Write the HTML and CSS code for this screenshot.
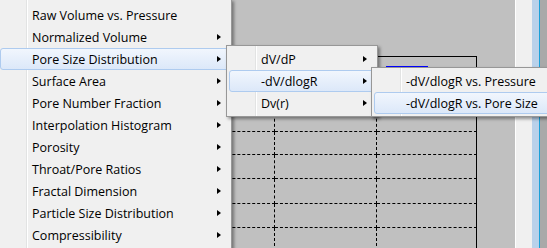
FILE: index.html
```html
<!DOCTYPE html>
<html lang="en">
<head>
    <meta charset="UTF-8">
    <title>Pore Size Distribution menu</title>
    <link rel="stylesheet" href="styles.css">
</head>
<body>
    <div class="chart">
        <div class="plot">
            <div class="cell"></div>
            <div class="cell"></div>
            <div class="cell"></div>
            <div class="cell"><div class="legend-line"></div></div>
            <div class="cell"></div>
            <div class="cell"></div>
            <div class="cell"></div>
            <div class="cell"></div>
            <div class="cell"></div>
            <div class="cell"></div>
            <div class="cell"></div>
            <div class="cell"></div>
            <div class="cell"></div>
            <div class="cell"></div>
            <div class="cell"></div>
            <div class="cell"></div>
            <div class="cell"></div>
            <div class="cell"></div>
            <div class="cell"></div>
            <div class="cell"></div>
            <div class="cell"></div>
            <div class="cell"></div>
            <div class="cell"></div>
            <div class="cell"></div>
        </div>
    </div>

    <div class="side">
        <div class="side-face"></div>
        <div class="side-blue"></div>
        <div class="side-edge"></div>
        <div class="side-dark"></div>
    </div>

    <!-- Main menu -->
    <ul class="menu menu-main">
        <li class="item">Raw Volume vs. Pressure</li>
        <li class="item">Normalized Volume<span class="arrow"></span></li>
        <li class="item active">Pore Size Distribution<span class="arrow"></span></li>
        <li class="item">Surface Area<span class="arrow"></span></li>
        <li class="item">Pore Number Fraction<span class="arrow"></span></li>
        <li class="item">Interpolation Histogram<span class="arrow"></span></li>
        <li class="item">Porosity<span class="arrow"></span></li>
        <li class="item">Throat/Pore Ratios<span class="arrow"></span></li>
        <li class="item">Fractal Dimension<span class="arrow"></span></li>
        <li class="item">Particle Size Distribution<span class="arrow"></span></li>
        <li class="item">Compressibility<span class="arrow"></span></li>
    </ul>

    <!-- Pore Size Distribution submenu -->
    <ul class="menu menu-psd">
        <li class="item">dV/dP<span class="arrow"></span></li>
        <li class="item active">-dV/dlogR<span class="arrow"></span></li>
        <li class="item">Dv(r)<span class="arrow"></span></li>
    </ul>

    <!-- -dV/dlogR submenu -->
    <ul class="menu menu-dlogr">
        <li class="item">-dV/dlogR vs. Pressure</li>
        <li class="item active">-dV/dlogR vs. Pore Size</li>
    </ul>
</body>
</html>
```

FILE: styles.css
```css
/* Reset */
* {
    margin: 0;
    padding: 0;
    box-sizing: border-box;
}

body {
    width: 547px;
    height: 248px;
    overflow: hidden;
    position: relative;
    display: flex;
    background: #c0c0c0;
    font-family: "Open Sans", "Noto Sans", sans-serif;
    font-size: 12.5px;
    color: #000;
}

/* Chart area */
.chart {
    width: 515px;
    height: 248px;
    padding: 56px 0 0 70px;
}

.plot {
    width: 407px;
    height: 200px;
    border: 1px solid #000;
    border-bottom: none;
    display: grid;
    grid-template-columns: 102px 102px 102px 100px;
    grid-template-rows: 75px 23px 24px 25px 24px 1fr;
}

.cell {
    border-right: 1px dashed #000;
    border-bottom: 1px dashed #000;
}

.cell:nth-child(4n) {
    border-right: none;
}

.legend-line {
    margin: 9px 0 0 9px;
    width: 42px;
    height: 2px;
    background: #0000ff;
}

/* Right scroller strip */
.side {
    width: 32px;
    height: 248px;
    display: flex;
    border-left: 1px solid #fff;
}

.side-face {
    width: 16px;
    background: #f0f0f0;
}

.side-blue {
    width: 7px;
    background: #b9d1ea;
}

.side-edge {
    width: 1px;
    background: #1aa0d8;
}

.side-dark {
    flex: 1;
    background: #a9a9a9;
}

/* Menus */
.menu {
    position: absolute;
    list-style: none;
    padding: 2px;
    border: 1px solid #979797;
    background:
        linear-gradient(to right, transparent 28px, #e2e3e3 28px, #e2e3e3 29px, #fff 29px, #fff 30px, transparent 30px),
        #f0f0f0;
    box-shadow: 2px 2px 3px rgba(0, 0, 0, 0.4);
}

.menu-main {
    left: -3px;
    top: -1px;
    padding-top: 4px;
    width: 235px;
    height: 252px;
}

.menu-psd {
    left: 226px;
    top: 45px;
    width: 152px;
}

.menu-dlogr {
    left: 371px;
    top: 67px;
    width: 200px;
}

.item {
    height: 22px;
    display: flex;
    align-items: center;
    padding-left: 31px;
    border: 1px solid transparent;
    border-radius: 3px;
    white-space: nowrap;
}

.item.active {
    border-color: #aecbef;
    background: linear-gradient(to bottom, #f1f6fd, #dce8f9);
}

.arrow {
    margin-left: auto;
    margin-right: 7px;
    width: 0;
    height: 0;
    border-style: solid;
    border-width: 3.5px 0 3.5px 4px;
    border-color: transparent transparent transparent #000;
}
```
